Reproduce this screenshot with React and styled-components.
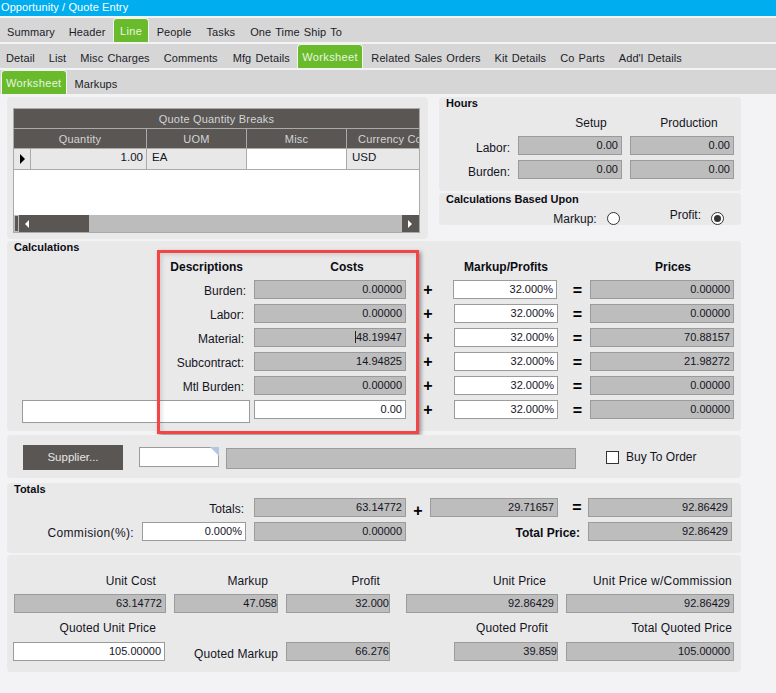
import React from "react";
import styled, { createGlobalStyle } from "styled-components";

const GlobalStyle = createGlobalStyle`
  html, body {
    margin: 0;
    padding: 0;
    background: #f3f3f5;
  }
  body {
    font-family: "Liberation Sans", Arial, sans-serif;
    font-size: 12px;
    color: #14141f;
  }
  #root {
    width: 776px;
    height: 693px;
    overflow: hidden;
  }
`;

const TitleBar = styled.div`
  height: 16px;
  line-height: 15px;
  background: #00adef;
  color: #fff;
  font-size: 11px;
  letter-spacing: 0.1px;
  padding-left: 1px;
  margin-bottom: 2px;
`;

const TabBar = styled.div`
  display: flex;
  height: 24px;
  background: #d6d6d6;
  margin-bottom: 2px;
  font-size: 11px;
  word-spacing: 1px;
`;

const Tab = styled.div`
  box-sizing: border-box;
  height: 24px;
  white-space: nowrap;
  line-height: 14px;
  padding: ${(props) => (props.$active ? `5px ${props.$side || 4}px 0` : "7px 7px 0")};
  margin-right: ${(props) => (props.$active ? 1 : 0)}px;
  margin-left: ${(props) => props.$nudge ?? (props.$active ? 1 : 0)}px;
  color: ${(props) => (props.$active ? "#e8f5e0" : "#1c1c2a")};
  background: ${(props) => (props.$active ? "#6abb2b" : "transparent")};
  border: ${(props) => (props.$active ? "1px solid #f2f7ee" : "0")};
  border-bottom: 0;
  border-radius: 4px 4px 0 0;
  letter-spacing: ${(props) => (props.$active ? "0.35px" : "0.1px")};
`;

const Content = styled.div`
  padding: 1px 35px 0 7px;
`;

const TopRow = styled.div`
  display: flex;
  gap: 11px;
  margin-bottom: 2px;
`;

const Panel = styled.section`
  position: relative;
  box-sizing: border-box;
  background: #e9e9e9;
  border-radius: 4px;
  margin-bottom: ${(props) => props.$after || 0}px;
`;

const GridPanel = styled(Panel)`
  width: 421px;
  height: 142px;
  padding: 11px 0 0 6px;
`;

const SideColumn = styled.div`
  display: flex;
  flex-direction: column;
  gap: 2px;
  width: 302px;
`;

const SectionTitle = styled.div`
  font-size: 11px;
  font-weight: bold;
  line-height: 13px;
  margin-left: 7px;
  color: #0c0c14;
`;

const QuoteTable = styled.div`
  box-sizing: border-box;
  width: 407px;
  height: 125px;
  border: 1px solid #aaa;
  background: #fff;
  display: flex;
  flex-direction: column;
`;

const TableTitle = styled.div`
  height: 19px;
  line-height: 21px;
  text-align: center;
  background: #595654;
  color: #d4d4d4;
  font-size: 11px;
  letter-spacing: 0.2px;
  border-bottom: 1px solid #aaa;
`;

const TableRow = styled.div`
  display: grid;
  grid-template-columns: 133px 100px 100px 72px;
  height: 20px;
`;

const DataRow = styled(TableRow)`
  grid-template-columns: 17px 116px 100px 100px 72px;
  height: 21px;
  font-size: 11.5px;
`;

const HeadCell = styled.div`
  box-sizing: border-box;
  background: #595654;
  color: #d4d4d4;
  font-size: 11px;
  letter-spacing: 0.2px;
  line-height: 21px;
  text-align: center;
  white-space: nowrap;
  overflow: hidden;
  border-bottom: 1px solid #aaa;
  border-right: 1px solid #aaa;
  &:last-child {
    border-right: 0;
    text-align: left;
    padding-left: 11px;
  }
`;

const DataCell = styled.div`
  box-sizing: border-box;
  background: ${(props) => (props.$blank ? "#fff" : "#e8e8e8")};
  color: #14141f;
  line-height: 17px;
  text-align: ${(props) => (props.$right ? "right" : "left")};
  padding: 0 3px 0 5px;
  border-bottom: 1px solid #aaa;
  border-right: 1px solid #aaa;
  &:last-child {
    border-right: 0;
  }
`;

const RowMarker = styled(DataCell)`
  display: flex;
  align-items: center;
  justify-content: center;
  padding: 0;
  &::after {
    content: "";
    border-left: 5px solid #000;
    border-top: 5px solid transparent;
    border-bottom: 5px solid transparent;
  }
`;

const TableBlank = styled.div`
  flex: 1;
`;

const ScrollBar = styled.div`
  display: flex;
  height: 17px;
  background: #bcbcbc;
`;

const ScrollGrip = styled.div`
  width: 3px;
  margin: 1px;
  background: #595654;
`;

const ScrollButton = styled.div`
  display: flex;
  align-items: center;
  box-sizing: border-box;
  width: ${(props) => props.$width}px;
  margin-left: ${(props) => (props.$end ? "auto" : "0")};
  padding-left: 6px;
  background: #595654;
  &::after {
    content: "";
    border-top: 4px solid transparent;
    border-bottom: 4px solid transparent;
    border-left: ${(props) => (props.$end ? "4px solid #fff" : "0")};
    border-right: ${(props) => (props.$end ? "0" : "4px solid #fff")};
  }
`;

const HoursGrid = styled.div`
  display: grid;
  grid-template-columns: 71px 104px 104px;
  column-gap: 8px;
  row-gap: 5px;
  margin: 6px 0 12px;
  grid-template-rows: 15px 19px 19px;
  align-items: center;
`;

const HoursHead = styled.div`
  grid-column: ${(props) => props.$col};
  text-align: center;
  padding-left: ${(props) => props.$left}px;
  padding-bottom: 2px;
`;

const RowLabel = styled.div`
  text-align: right;
  white-space: nowrap;
  padding-top: ${(props) => props.$drop || 2}px;
  padding-right: ${(props) => props.$pad || 0}px;
`;

const CommissionLabel = styled(RowLabel)`
  letter-spacing: 0.35px;
`;

const Field = styled.div`
  box-sizing: border-box;
  grid-column: ${(props) => props.$col || "auto"};
  grid-row: ${(props) => props.$row || "auto"};
  align-self: ${(props) => (props.$top ? "start" : "auto")};
  justify-self: ${(props) => (props.$end ? "end" : "stretch")};
  width: ${(props) => (props.$width ? `${props.$width}px` : "auto")};
  height: ${(props) => props.$height || 19}px;
  line-height: 16px;
  font-size: 11px;
  text-align: right;
  white-space: nowrap;
  overflow: hidden;
  padding-right: ${(props) => (props.$tight ? 0 : 3)}px;
  border: 1px solid #9b9b9b;
  background: ${(props) => (props.$input ? "#fff" : "#bdbdbd")};
  margin-left: ${(props) => props.$shift || 0}px;
`;

const Caret = styled.span`
  border-left: 1px solid #222;
`;

const BasedRow = styled.div`
  display: flex;
  justify-content: flex-end;
  gap: 50px;
  height: 14px;
  margin-top: 5px;
  padding-right: 17px;
`;

const RadioGroup = styled.label`
  display: flex;
  align-items: center;
  gap: 10px;
`;

const RadioText = styled.span`
  position: relative;
  top: ${(props) => props.$top || 0}px;
`;

const Radio = styled.span`
  box-sizing: border-box;
  display: flex;
  align-items: center;
  justify-content: center;
  width: 13px;
  height: 13px;
  border: 1px solid #333;
  border-radius: 50%;
  background: #fff;
  &::after {
    content: "";
    display: ${(props) => (props.$checked ? "block" : "none")};
    width: 7px;
    height: 7px;
    border-radius: 50%;
    background: #333;
  }
`;

const CalcGrid = styled.div`
  display: grid;
  grid-template-columns: 232px 152px 48px 104px 32px 144px;
  grid-template-rows: 15px repeat(5, 19px) auto;
  row-gap: 5px;
  align-items: center;
  margin-top: 6px;
  padding: 0 0 8px 15px;
`;

const ColHead = styled.div`
  grid-column: ${(props) => props.$col};
  font-weight: bold;
  text-align: ${(props) => props.$align || "center"};
  padding-right: ${(props) => props.$right || 0}px;
  padding-left: ${(props) => props.$left || 0}px;
  padding-bottom: 2px;
  color: #0c0c14;
`;

const Operator = styled.div`
  font-size: 16px;
  font-weight: bold;
  line-height: 19px;
  text-align: center;
  color: #000;
  align-self: ${(props) => (props.$top ? "start" : "auto")};
  padding: ${(props) => (props.$eq ? "1px 0 0 7px" : "0 4px 0 0")};
`;

const RedBox = styled.div`
  position: absolute;
  left: 150px;
  top: 9px;
  width: 262px;
  height: 184px;
  box-sizing: border-box;
  border: 3px solid #f44446;
  box-shadow: 2px 2px 4px rgba(0, 0, 0, 0.4), inset 2px 2px 4px rgba(0, 0, 0, 0.12);
  pointer-events: none;
`;

const SupplierPanel = styled(Panel)`
  display: flex;
  align-items: center;
  height: 43px;
  padding: 1px 0 0 16px;
`;

const SupplierButton = styled.button`
  width: 100px;
  height: 25px;
  padding: 0;
  border: 0;
  background: #595654;
  color: #e6e6e6;
  font: 11.5px "Liberation Sans", Arial, sans-serif;
  margin-right: 16px;
`;

const PartInput = styled.div`
  position: relative;
  box-sizing: border-box;
  width: 80px;
  height: 20px;
  background: #fff;
  border: 1px solid #9b9b9b;
  margin-right: 7px;
  &::after {
    content: "";
    position: absolute;
    top: -1px;
    right: -1px;
    border-top: 9px solid #b3c6e0;
    border-left: 9px solid transparent;
  }
`;

const SupplierName = styled(Field)`
  width: 350px;
  height: 21px;
  margin: 2px 30px 0 0;
`;

const CheckBox = styled.span`
  box-sizing: border-box;
  width: 13px;
  height: 13px;
  background: #fff;
  border: 1px solid #333;
  margin-right: 7px;
`;

const TotalsGrid = styled.div`
  display: grid;
  grid-template-columns: 240px 152px 24px 128px 30px 144px;
  grid-template-rows: 19px 19px;
  row-gap: 5px;
  align-items: center;
  margin-top: 2px;
  padding: 0 0 12px 7px;
`;

const CommissionCell = styled.div`
  display: flex;
  justify-content: flex-end;
  align-items: center;
  gap: 8px;
  padding-right: 8px;
`;

const TotalLabel = styled.div`
  grid-column: 3 / 6;
  text-align: right;
  font-weight: bold;
  padding: 2px 8px 0 0;
  color: #0c0c14;
`;

const TotalPlus = styled(Operator)`
  padding: 6px 0 0;
`;

const TotalEquals = styled(Operator)`
  padding: 0 0 0 8px;
`;

const SummaryGrid = styled.div`
  display: grid;
  grid-template-columns: 152px 104px 104px 0 152px 168px;
  grid-template-rows: 14px 19px 15px 19px;
  column-gap: 8px;
  row-gap: 7px;
  padding: 18px 0 11px 7px;
`;

const SummaryLabel = styled.div`
  grid-column: ${(props) => props.$col};
  grid-row: ${(props) => props.$row};
  text-align: right;
  white-space: nowrap;
  line-height: 14px;
  letter-spacing: ${(props) => props.$spacing || 0.1}px;
  padding-top: 1px;
  padding-right: ${(props) => props.$pad || 0}px;
`;

const QuotedMarkup = styled(SummaryLabel)`
  align-self: center;
  padding-top: 4px;
`;

const costRows = [
  { label: "Burden:", cost: "0.00000", price: "0.00000", flush: true },
  { label: "Labor:", cost: "0.00000", price: "0.00000" },
  { label: "Material:", cost: "48.19947", price: "70.88157", caret: true },
  { label: "Subcontract:", cost: "14.94825", price: "21.98272" },
  { label: "Mtl Burden:", cost: "0.00000", price: "0.00000" },
];

// nudge values are left margins, the old app does not space its tabs evenly
const topTabs = [
  { name: "Summary" },
  { name: "Header" },
  { name: "Line", active: true, side: 5.5 },
  { name: "People" },
  { name: "Tasks", nudge: 1 },
  { name: "One Time Ship To", nudge: 1 },
];
const lineTabs = [
  { name: "Detail", nudge: -1 },
  { name: "List" },
  { name: "Misc Charges" },
  { name: "Comments" },
  { name: "Mfg Details", nudge: 1 },
  { name: "Worksheet", active: true, side: 4.5, nudge: 0 },
  { name: "Related Sales Orders" },
  { name: "Kit Details" },
  { name: "Co Parts" },
  { name: "Add'l Details" },
];

const TabRow = ({ tabs }) => (
  <TabBar>
    {tabs.map((tab) => (
      <Tab key={tab.name} $active={tab.active} $side={tab.side} $nudge={tab.nudge}>
        {tab.name}
      </Tab>
    ))}
  </TabBar>
);

const App = () => {
  return (
    <>
      <GlobalStyle />
      <TitleBar>Opportunity / Quote Entry</TitleBar>
      <TabRow tabs={topTabs} />
      <TabRow tabs={lineTabs} />
      <TabRow tabs={[{ name: "Worksheet", active: true }, { name: "Markups" }]} />

      <Content>
        <TopRow>
          <GridPanel>
            <QuoteTable>
              <TableTitle>Quote Quantity Breaks</TableTitle>
              <TableRow>
                <HeadCell>Quantity</HeadCell>
                <HeadCell>UOM</HeadCell>
                <HeadCell>Misc</HeadCell>
                <HeadCell>Currency Code</HeadCell>
              </TableRow>
              <DataRow>
                <RowMarker />
                <DataCell $right>1.00</DataCell>
                <DataCell>EA</DataCell>
                <DataCell $blank />
                <DataCell>USD</DataCell>
              </DataRow>
              <TableBlank />
              <ScrollBar>
                <ScrollGrip />
                <ScrollButton $width={70} />
                <ScrollButton $width={17} $end />
              </ScrollBar>
            </QuoteTable>
          </GridPanel>

          <SideColumn>
            <Panel>
              <SectionTitle>Hours</SectionTitle>
              <HoursGrid>
                <HoursHead $col={2} $left={42}>Setup</HoursHead>
                <HoursHead $col={3} $left={14}>Production</HoursHead>
                <RowLabel $drop={4}>Labor:</RowLabel>
                <Field>0.00</Field>
                <Field>0.00</Field>
                <RowLabel $drop={4}>Burden:</RowLabel>
                <Field>0.00</Field>
                <Field>0.00</Field>
              </HoursGrid>
            </Panel>
            <Panel>
              <SectionTitle>Calculations Based Upon</SectionTitle>
              <BasedRow>
                <RadioGroup>
                  <RadioText $top={1}>Markup:</RadioText>
                  <Radio />
                </RadioGroup>
                <RadioGroup>
                  <RadioText $top={-3}>Profit:</RadioText>
                  <Radio $checked />
                </RadioGroup>
              </BasedRow>
            </Panel>
          </SideColumn>
        </TopRow>

        <Panel $after={4}>
          <SectionTitle>Calculations</SectionTitle>
          <CalcGrid>
            <ColHead $col={1} $align="right" $right={11}>
              Descriptions
            </ColHead>
            <ColHead $col={2} $left={34}>Costs</ColHead>
            <ColHead $col={4}>Markup/Profits</ColHead>
            <ColHead $col={6} $left={22}>Prices</ColHead>
            {costRows.map((row, i) => (
              <React.Fragment key={row.label}>
                <RowLabel $pad={row.flush ? 8 : 10}>{row.label}</RowLabel>
                <Field>
                  {row.caret && <Caret />}
                  {row.cost}
                </Field>
                <Operator>+</Operator>
                <Field $input $width={104} $shift={i === 0 ? -1 : 0}>
                  32.000%
                </Field>
                <Operator $eq>=</Operator>
                <Field>{row.price}</Field>
              </React.Fragment>
            ))}
            <Field $input $width={228} $height={23} />
            <Field $input $top>0.00</Field>
            <Operator $top>+</Operator>
            <Field $input $top>32.000%</Field>
            <Operator $eq $top>=</Operator>
            <Field $top>0.00000</Field>
          </CalcGrid>
          <RedBox />
        </Panel>

        <SupplierPanel $after={5}>
          <SupplierButton>Supplier...</SupplierButton>
          <PartInput />
          <SupplierName />
          <CheckBox />
          Buy To Order
        </SupplierPanel>

        <Panel $after={2}>
          <SectionTitle>Totals</SectionTitle>
          <TotalsGrid>
            <RowLabel $pad={10}>Totals:</RowLabel>
            <Field>63.14772</Field>
            <TotalPlus>+</TotalPlus>
            <Field>29.71657</Field>
            <TotalEquals>=</TotalEquals>
            <Field>92.86429</Field>
            <CommissionCell>
              <CommissionLabel>Commision(%):</CommissionLabel>
              <Field $input $width={104}>0.000%</Field>
            </CommissionCell>
            <Field>0.00000</Field>
            <TotalLabel>Total Price:</TotalLabel>
            <Field>92.86429</Field>
          </TotalsGrid>
        </Panel>

        <Panel>
          <SummaryGrid>
            <SummaryLabel $col={1} $pad={10}>Unit Cost</SummaryLabel>
            <SummaryLabel $col={2} $pad={10}>Markup</SummaryLabel>
            <SummaryLabel $col={3} $pad={10}>Profit</SummaryLabel>
            <SummaryLabel $col={5} $pad={12}>Unit Price</SummaryLabel>
            <SummaryLabel $col={6} $pad={2} $spacing={0.25}>Unit Price w/Commission</SummaryLabel>

            <Field $col={1} $row={2}>63.14772</Field>
            <Field $col={2} $row={2} $tight>47.058</Field>
            <Field $col={3} $row={2} $tight>32.000</Field>
            <Field $col={5} $row={2}>92.86429</Field>
            <Field $col={6} $row={2}>92.86429</Field>

            <SummaryLabel $col={1} $row={3} $pad={10}>Quoted Unit Price</SummaryLabel>
            <SummaryLabel $col={5} $row={3} $pad={10}>Quoted Profit</SummaryLabel>
            <SummaryLabel $col={6} $row={3} $pad={2}>Total Quoted Price</SummaryLabel>

            <Field $col={1} $row={4} $input $width={152} $shift={-1}>105.00000</Field>
            <QuotedMarkup $col={2} $row={4}>Quoted Markup</QuotedMarkup>
            <Field $col={3} $row={4} $tight>66.276</Field>
            <Field $col={5} $row={4} $tight $width={104} $end>39.859</Field>
            <Field $col={6} $row={4}>105.00000</Field>
          </SummaryGrid>
        </Panel>
      </Content>
    </>
  );
};

export default App;
